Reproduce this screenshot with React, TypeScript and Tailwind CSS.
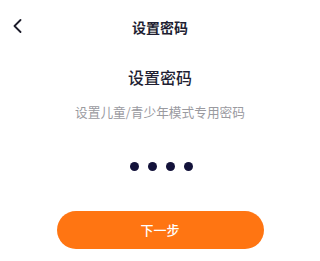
export default function App() {
  return (
    <div
      className="w-[320px] h-[261px] bg-white flex flex-col items-center"
      style={{ fontFamily: '"Noto Sans CJK SC", "Noto Sans", sans-serif' }}
    >
      <div className="relative w-full h-[54px] flex items-center justify-center">
        <button className="absolute left-[9px] top-[16px] w-[16px] h-[20px] flex items-center justify-center text-[#1c1c2a]">
          <svg width="10" height="14" viewBox="0 0 10 14" fill="none">
            <path d="M8.5 1 L2.5 7 L8.5 13" stroke="currentColor" strokeWidth="1.8" strokeLinecap="round" strokeLinejoin="round" />
          </svg>
        </button>
        <h1 className="text-[14px] leading-[20px] font-bold text-[#1f1f33]">设置密码</h1>
      </div>

      <h2 className="mt-[11px] text-[16px] leading-[24px] font-medium text-[#1f1f33]">设置密码</h2>
      <p className="mt-[13px] text-[12.7px] leading-[20px] text-[#9a9a9f]">设置儿童/青少年模式专用密码</p>

      <div className="mt-[40px] flex gap-[9px] ml-[3px]">
        <span className="w-[9px] h-[9px] rounded-full bg-[#13123a]" />
        <span className="w-[9px] h-[9px] rounded-full bg-[#13123a]" />
        <span className="w-[9px] h-[9px] rounded-full bg-[#13123a]" />
        <span className="w-[9px] h-[9px] rounded-full bg-[#13123a]" />
      </div>

      <button className="mt-[40px] w-[207px] h-[38px] rounded-full bg-[#ff7512] text-white text-[13px] font-medium flex items-center justify-center">
        下一步
      </button>
    </div>
  )
}
